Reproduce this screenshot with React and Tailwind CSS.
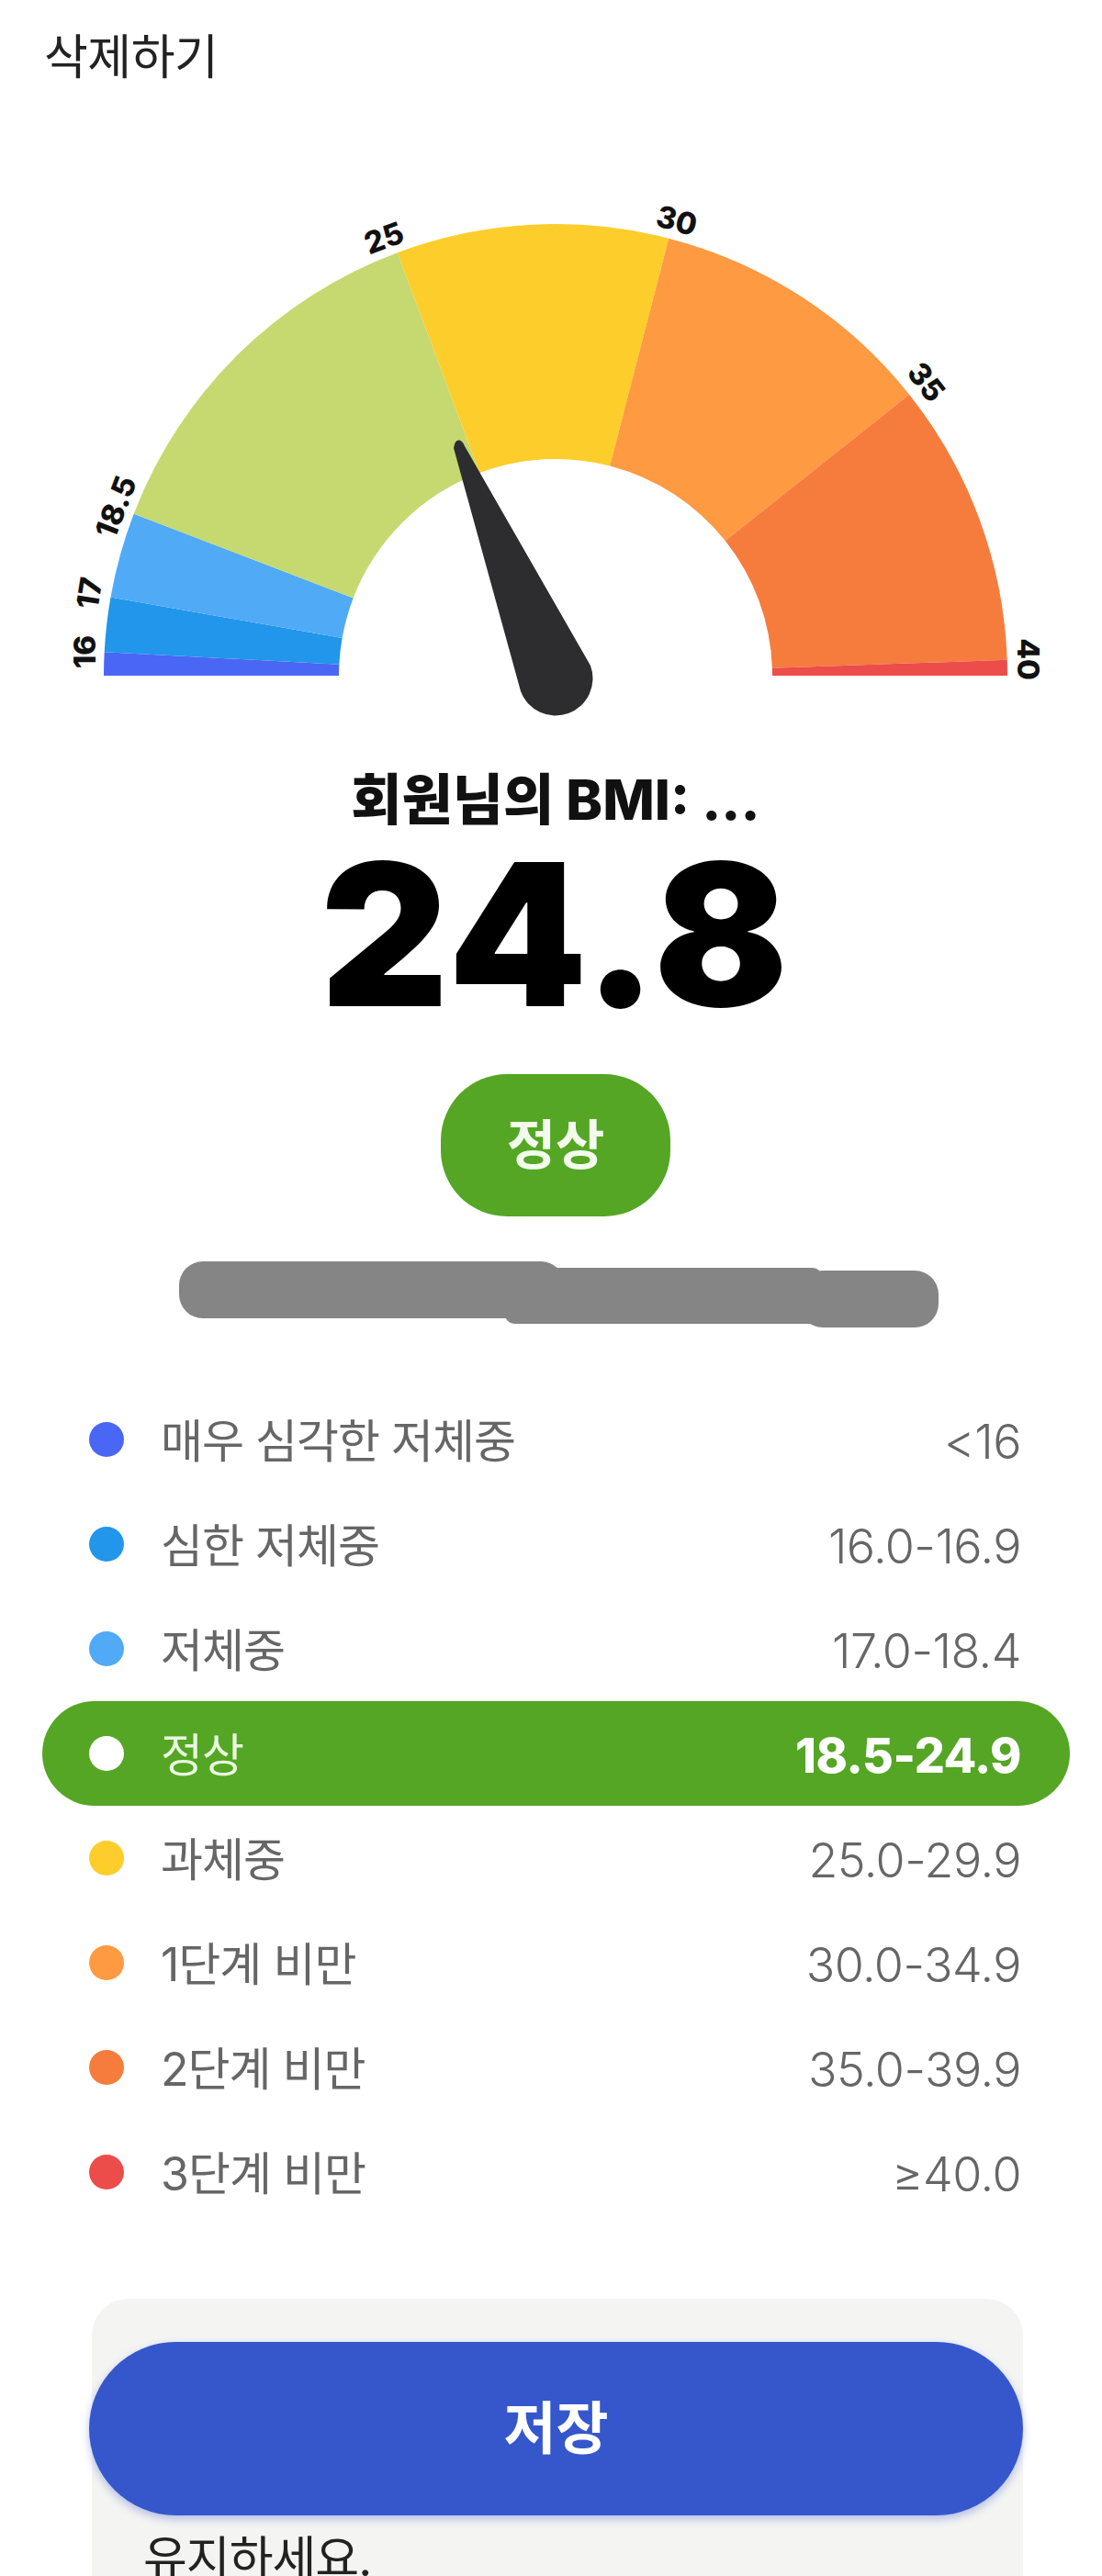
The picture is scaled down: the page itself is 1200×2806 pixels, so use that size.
const CX = 605;
const CY = 736;
const OUTER = 492;
const INNER = 236;

const SEGMENTS = [
  { from: 0, to: 3, color: '#4a66f5' },
  { from: 3, to: 10, color: '#2196ea' },
  { from: 10, to: 21, color: '#50aaf5' },
  { from: 21, to: 69.5, color: '#c6d870' },
  { from: 69.5, to: 104.5, color: '#fdcd2b' },
  { from: 104.5, to: 141.5, color: '#fe9a42' },
  { from: 141.5, to: 178, color: '#f67c3d' },
  { from: 178, to: 180, color: '#ec4d4a' },
];

const TICKS = [
  { text: '16', x: 92, y: 710, rotate: -90 },
  { text: '17', x: 97, y: 646, rotate: -81 },
  { text: '18.5', x: 126, y: 552, rotate: -69 },
  { text: '25', x: 418, y: 259, rotate: -20 },
  { text: '30', x: 737, y: 240, rotate: 15 },
  { text: '35', x: 1009, y: 416, rotate: 52 },
  { text: '40', x: 1120, y: 718, rotate: 90 },
];

const RANGES = [
  { label: '매우 심각한 저체중', value: '<16', dot: 'bg-[#4a66f5]' },
  { label: '심한 저체중', value: '16.0-16.9', dot: 'bg-[#2196ea]' },
  { label: '저체중', value: '17.0-18.4', dot: 'bg-[#50aaf5]' },
  { label: '정상', value: '18.5-24.9', dot: 'bg-white', active: true },
  { label: '과체중', value: '25.0-29.9', dot: 'bg-[#fdcd2b]' },
  { label: '1단계 비만', value: '30.0-34.9', dot: 'bg-[#fe9a42]' },
  { label: '2단계 비만', value: '35.0-39.9', dot: 'bg-[#f67c3d]' },
  { label: '3단계 비만', value: '≥40.0', dot: 'bg-[#ec4d4a]' },
];

// angle is measured clockwise from the left end of the baseline
const polar = (r, deg) => {
  const a = (deg * Math.PI) / 180;
  return `${CX - r * Math.cos(a)} ${CY - r * Math.sin(a)}`;
};

const segmentPath = ({ from, to }) =>
  `M${polar(OUTER, from)} A${OUTER} ${OUTER} 0 0 1 ${polar(OUTER, to)} L${polar(INNER, to)} A${INNER} ${INNER} 0 0 0 ${polar(INNER, from)} Z`;

function Gauge() {
  return (
    <svg viewBox="0 115 1200 685" className="block h-[685px] w-[1200px]">
      {SEGMENTS.map((s) => (
        <path key={s.from} d={segmentPath(s)} fill={s.color} />
      ))}
      {TICKS.map((t) => (
        <text
          key={t.text}
          x={t.x}
          y={t.y}
          transform={`rotate(${t.rotate} ${t.x} ${t.y})`}
          textAnchor="middle"
          dominantBaseline="central"
          fontSize="33"
          fontWeight="800"
          fill="#111"
        >
          {t.text}
        </text>
      ))}
      {/* needle */}
      <path
        d="M494 488 Q496 476 503 481 Q505 483 506 486 L643 725 A40 40 0 1 1 567 753 Z"
        fill="#2d2d2f"
      />
    </svg>
  );
}

function RangeRow({ label, value, dot, active }) {
  return (
    <div
      className={`flex h-[114px] items-center rounded-full pl-[51px] pr-[53px] ${
        active ? 'bg-[#54a624] text-[#e9f8df]' : 'text-[#666666]'
      }`}
    >
      <span className={`h-[38px] w-[38px] shrink-0 rounded-full ${dot}`} />
      <span className="ml-[40px] mt-[5px] text-[50px] tracking-[-1px]">{label}</span>
      <span
        className={`ml-auto mt-[5px] text-[52px] tracking-[-0.5px] ${active ? 'font-extrabold text-white' : 'font-light'}`}
      >
        {value}
      </span>
    </div>
  );
}

export default function App() {
  return (
    <div className="h-[2806px] w-[1200px] overflow-hidden bg-white font-[Inter,'Noto_Sans_CJK_KR',sans-serif]">
      <div className="h-[115px] pl-[48px] pt-[30px] text-[52px] leading-[66px] tracking-[-0.5px] text-[#222222]">
        삭제하기
      </div>
      <Gauge />

      <div className="w-[1210px]">
        <div className="mt-[36px] text-center text-[60px] font-extrabold leading-[70px] text-[#111111]">
          회원님의 BMI: ...
        </div>
        <div className="mt-[12px] text-center text-[216px] font-black leading-[200px] tracking-[3px] text-black">
          24.8
        </div>

        <div className="mt-[52px] flex justify-center">
          <div className="flex h-[155px] w-[250px] items-center justify-center rounded-[72px] bg-[#54a624] text-[58px] font-bold text-[#f2fbec]">
            정상
          </div>
        </div>
      </div>

      {/* blurred-out sentence in the source picture */}
      <div className="relative mt-[49px] h-[72px] w-[1200px]">
        <div className="absolute left-[195px] top-0 h-[62px] w-[420px] rounded-[26px] bg-[#858585]" />
        <div className="absolute left-[550px] top-[7px] h-[61px] w-[345px] rounded-[10px] bg-[#858585]" />
        <div className="absolute left-[870px] top-[10px] h-[62px] w-[152px] rounded-[26px] bg-[#858585]" />
      </div>

      <div className="mt-[65px] w-[1211px] px-[46px]">
        {RANGES.map((r) => (
          <RangeRow key={r.label} {...r} />
        ))}
      </div>

      <div className="ml-[100px] mt-[81px] h-[400px] w-[1014px] rounded-t-[40px] bg-[#f4f4f2] pt-[47px]">
        <button className="-ml-[3px] flex h-[189px] w-[1017px] items-center justify-center rounded-full bg-[#3657cc] text-[62px] font-bold text-white shadow-[0_4px_10px_rgba(54,87,204,0.35)]">
          저장
        </button>
        <div className="ml-[56px] mt-[18px] text-[52px] leading-[60px] tracking-[-1px] text-[#222222]">유지하세요.</div>
      </div>
    </div>
  );
}
